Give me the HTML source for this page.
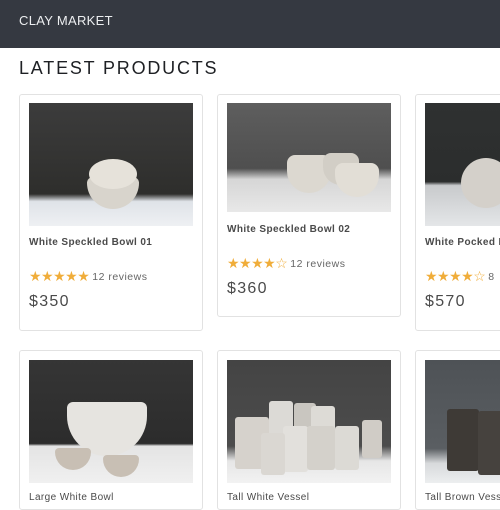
<!DOCTYPE html>
<html><head><style>
*{margin:0;padding:0;box-sizing:border-box}
body{width:500px;height:500px;overflow:hidden;background:#fff;font-family:"Liberation Sans",sans-serif;position:relative}
.hd{position:absolute;left:0;top:0;width:500px;height:48px;background:#353941}
.hd span{position:absolute;left:19px;top:13px;color:#eceef0;font-size:13px;letter-spacing:0.3px}
h1{position:absolute;left:19px;top:58px;font-size:18px;font-weight:normal;letter-spacing:1.8px;color:#1e2024}
.card{position:absolute;border:1px solid #e2e2e2;border-radius:3px;background:#fff}
.img{position:absolute;overflow:hidden}
.t{position:absolute;font-size:10px;color:#4a4a4a;font-weight:bold;letter-spacing:0.4px;white-space:nowrap}
.s{position:absolute;font-size:14px;color:#f0ad3a;letter-spacing:-0.5px;white-space:nowrap;line-height:14px}
.s i{font-style:normal;color:#666;font-size:10.5px;letter-spacing:0.5px;margin-left:3px;vertical-align:1px}
.p{position:absolute;font-size:16px;color:#4a4a4a;letter-spacing:1.3px}
.sh{position:absolute;border-radius:50%}
</style></head><body>
<div class="hd"><span>CLAY MARKET</span></div>
<h1>LATEST PRODUCTS</h1>

<div class="card" style="left:19px;top:94px;width:184px;height:237px"></div>
<div class="img" style="left:29px;top:103px;width:164px;height:123px;background:linear-gradient(180deg,#3c3c3c 0%,#2e2e2c 74%,#dfe3e8 80%,#eef0f3 100%)">
<div class="sh" style="left:58px;top:74px;width:52px;height:32px;background:#d8d4cc;border-radius:6px 6px 26px 26px"></div>
<div class="sh" style="left:60px;top:56px;width:48px;height:30px;background:#e6e2da"></div>
</div>
<div class="t" style="left:29px;top:237px">White Speckled Bowl 01</div>
<div class="s" style="left:29px;top:269px">★★★★★<i>12 reviews</i></div>
<div class="p" style="left:29px;top:293px">$350</div>

<div class="card" style="left:217px;top:94px;width:184px;height:223px"></div>
<div class="img" style="left:227px;top:103px;width:164px;height:109px;background:linear-gradient(180deg,#5e5e5e 0%,#4f4f4f 60%,#d6d6d6 70%,#e8e8e8 100%)">
<div class="sh" style="left:60px;top:52px;width:44px;height:38px;background:#dcd8d0;border-radius:8px 8px 22px 22px"></div>
<div class="sh" style="left:96px;top:50px;width:36px;height:32px;background:#d2cec6;border-radius:8px 8px 18px 18px"></div>
<div class="sh" style="left:108px;top:60px;width:44px;height:34px;background:#e2ded6;border-radius:8px 8px 22px 22px"></div>
</div>
<div class="t" style="left:227px;top:224px">White Speckled Bowl 02</div>
<div class="s" style="left:227px;top:256px">★★★★☆<i>12 reviews</i></div>
<div class="p" style="left:227px;top:280px">$360</div>

<div class="card" style="left:415px;top:94px;width:100px;height:237px"></div>
<div class="img" style="left:425px;top:103px;width:80px;height:123px;background:linear-gradient(180deg,#2f3131 0%,#2b2d2d 64%,#c8cacc 67%,#e4e6e8 100%)">
<div class="sh" style="left:36px;top:55px;width:50px;height:50px;background:#d4d0ca"></div>
</div>
<div class="t" style="left:425px;top:237px">White Pocked Bowl</div>
<div class="s" style="left:425px;top:269px">★★★★☆<i>8</i></div>
<div class="p" style="left:425px;top:293px">$570</div>

<div class="card" style="left:19px;top:350px;width:184px;height:160px"></div>
<div class="img" style="left:29px;top:360px;width:164px;height:123px;background:linear-gradient(180deg,#353535 0%,#2c2c2c 68%,#e4e4e4 70%,#f0f0f0 100%)">
<div class="sh" style="left:38px;top:42px;width:80px;height:54px;background:#e6e4e0;border-radius:6px 6px 40px 40px"></div>
<div class="sh" style="left:26px;top:88px;width:36px;height:22px;background:#c8bfb4;border-radius:4px 4px 18px 18px"></div>
<div class="sh" style="left:74px;top:95px;width:36px;height:22px;background:#c8bfb4;border-radius:4px 4px 18px 18px"></div>
</div>
<div class="t" style="left:29px;top:492px;font-weight:normal">Large White Bowl</div>

<div class="card" style="left:217px;top:350px;width:184px;height:160px"></div>
<div class="img" style="left:227px;top:360px;width:164px;height:123px;background:linear-gradient(180deg,#444 0%,#4c4c4c 70%,#e6e6e6 82%,#f2f2f2 100%)">
<div class="sh" style="left:8px;top:57px;width:34px;height:52px;background:#d6d2cc;border-radius:3px"></div>
<div class="sh" style="left:42px;top:41px;width:24px;height:36px;background:#dcdad6;border-radius:3px"></div>
<div class="sh" style="left:67px;top:43px;width:22px;height:36px;background:#c9c6c0;border-radius:3px"></div>
<div class="sh" style="left:84px;top:46px;width:24px;height:34px;background:#dddbd6;border-radius:3px"></div>
<div class="sh" style="left:56px;top:66px;width:25px;height:46px;background:#e2e0dc;border-radius:3px"></div>
<div class="sh" style="left:80px;top:66px;width:28px;height:44px;background:#d4d1cb;border-radius:3px"></div>
<div class="sh" style="left:108px;top:66px;width:24px;height:44px;background:#dcdad5;border-radius:3px"></div>
<div class="sh" style="left:135px;top:60px;width:20px;height:38px;background:#d0ccc6;border-radius:3px"></div>
<div class="sh" style="left:34px;top:73px;width:24px;height:42px;background:#dad7d2;border-radius:3px"></div>
</div>
<div class="t" style="left:227px;top:492px;font-weight:normal">Tall White Vessel</div>

<div class="card" style="left:415px;top:350px;width:100px;height:160px"></div>
<div class="img" style="left:425px;top:360px;width:80px;height:123px;background:linear-gradient(180deg,#4e5256 0%,#5a5e62 72%,#d8dadc 84%,#eceeef 100%)">
<div class="sh" style="left:22px;top:49px;width:32px;height:62px;background:#3e3a36;border-radius:3px"></div>
<div class="sh" style="left:53px;top:51px;width:30px;height:64px;background:#46423e;border-radius:3px"></div>
</div>
<div class="t" style="left:425px;top:492px;font-weight:normal">Tall Brown Vessel</div>
</body></html>
